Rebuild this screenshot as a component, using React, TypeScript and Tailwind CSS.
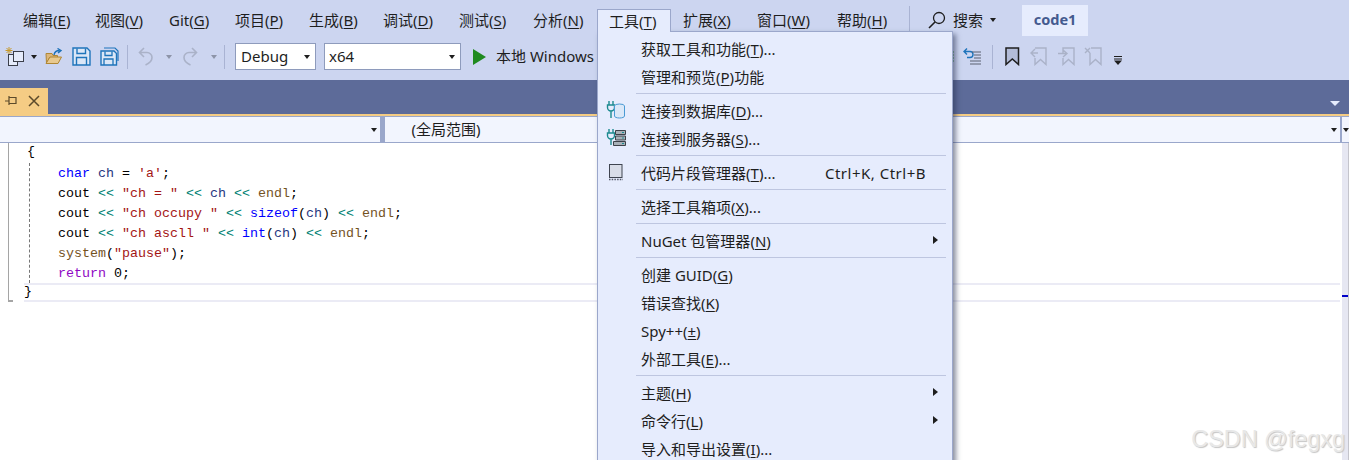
import type { ReactNode } from "react";

const MENUS = [
  { text: "编辑", key: "E", cls: "w-[72px]" },
  { text: "视图", key: "V", cls: "w-[74px]" },
  { text: "Git", key: "G", cls: "w-[66px]" },
  { text: "项目", key: "P", cls: "w-[74px]" },
  { text: "生成", key: "B", cls: "w-[74px]" },
  { text: "调试", key: "D", cls: "w-[76px]" },
  { text: "测试", key: "S", cls: "w-[74px]" },
  { text: "分析", key: "N", cls: "w-[76px]" },
];

const MENUS_AFTER = [
  { text: "扩展", key: "X", cls: "w-[74px]" },
  { text: "窗口", key: "W", cls: "w-[80px]" },
  { text: "帮助", key: "H", cls: "w-[72px]" },
];

function Mnemonic({ text, k, tail = "" }: { text: string; k: string; tail?: string }) {
  return (
    <span className="whitespace-nowrap">
      {text}(<span className="underline underline-offset-2">{k}</span>){tail}
    </span>
  );
}

function Caret({ className = "" }: { className?: string }) {
  return <span className={`block h-0 w-0 border-x-[3.5px] border-t-[4px] border-x-transparent ${className}`} />;
}

function Divider({ className = "" }: { className?: string }) {
  return <span className={`block h-6 w-px bg-[#a9b3d3] ${className}`} />;
}

function Sep() {
  return (
    <div className="flex h-1.5 items-center pl-[38px] pr-[2px]">
      <div className="h-px w-full bg-[#bec6e0]" />
    </div>
  );
}

function Item({ icon, right, arrow, children }: { icon?: ReactNode; right?: string; arrow?: boolean; children: ReactNode }) {
  return (
    <div className="flex h-7 items-center text-[#1e1e1e]">
      <div className="flex w-[43px] shrink-0 items-center pl-[8px]">{icon}</div>
      <div className="flex-1 pt-[2px]">{children}</div>
      {right && <span className="mr-[22px] whitespace-nowrap pt-[2px] tracking-[0.5px]">{right}</span>}
      {arrow && <span className="mr-[10px] block h-0 w-0 border-y-[4px] border-l-[5px] border-y-transparent border-l-[#1e1e1e]" />}
    </div>
  );
}

const DbIcon = (
  <svg width="20" height="20" viewBox="0 0 20 20" fill="none">
    <path d="M3 1v4M7 1v4M1.500 5h7v2.500a3.500 3.500 0 0 1-7 0ZM5 11v7" stroke="#1c8a90" strokeWidth="1.400" />
    <ellipse cx="13.500" cy="6" rx="5" ry="2" fill="#dbe8f8" stroke="#4a9ad4" />
    <path d="M8.500 6v10c0 1.200 2.200 2 5 2s5-.8 5-2V6" fill="#dbe8f8" stroke="#4a9ad4" />
  </svg>
);

const ServerIcon = (
  <svg width="21" height="20" viewBox="0 0 21 20" fill="none">
    <path d="M3 1v4M7 1v4M1.500 5h7v2.500a3.500 3.500 0 0 1-7 0ZM5 11v6" stroke="#1c8a90" strokeWidth="1.400" />
    <path d="M9.500 2.500h10v4h-10ZM9.500 8h10v4h-10ZM7.500 13.500h12v4h-12Z" fill="#a8b0b8" stroke="#3c4148" />
    <path d="M16 4.500h2M16 10h2M16 15.500h2" stroke="#1c8a90" />
  </svg>
);

const SnippetIcon = (
  <svg className="ml-[2px]" width="16" height="18" viewBox="0 0 16 18" fill="none">
    <rect x="1.500" y="1.500" width="12.500" height="13" fill="#d9dde8" stroke="#3f4450" />
    <path d="M1 16.500h14" stroke="#55596a" strokeDasharray="1.500 1.200" strokeWidth="1.600" />
  </svg>
);

function Toolbar() {
  return (
    <div className="flex h-10 items-center pb-[7px]">
      <svg className="ml-[4px]" width="22" height="22" viewBox="0 0 22 22" fill="none">
        <path d="M5 1v7M1.500 4.500h7M2.500 2l5 5M7.500 2l-5 5" stroke="#c79a2c" />
        <rect x="4.500" y="8.500" width="9" height="11" fill="#e6ecfb" stroke="#3b3f4a" />
        <rect x="9.500" y="5.500" width="10" height="10" fill="#e6ecfb" stroke="#3b3f4a" />
      </svg>
      <Caret className="ml-[5px] border-t-[#1e1e1e]" />
      <svg className="ml-[8px]" width="18" height="18" viewBox="0 0 18 18" fill="none">
        <path d="M1 5.500h6l1 2h4.500v2h-8L1.500 15.500Z" fill="#dcb67a" stroke="#b08734" />
        <path d="M1 15.500h12l3.500-6.500H5Z" fill="#e8c98f" stroke="#b08734" />
        <path d="M9 7c.5-3 2.500-4.500 5.500-4.500M12.500 0.500l3.500 2-3 2.500" stroke="#1c71b8" strokeWidth="1.400" />
      </svg>
      <svg className="ml-[9px]" width="19" height="19" viewBox="0 0 19 19" fill="none">
        <path d="M1 1h14l3 3v14H1Z" fill="#dbe7f7" stroke="#1e74bb" strokeWidth="1.400" />
        <path d="M5 1.500v5h8.500v-5M4.500 18v-7.500h10V18" stroke="#1e74bb" strokeWidth="1.400" />
      </svg>
      <svg className="ml-[9px]" width="19" height="19" viewBox="0 0 19 19" fill="none">
        <path d="M4 1h11l3 3v10" stroke="#1e74bb" strokeWidth="1.200" />
        <path d="M1 4h13l2.500 2.500V18H1Z" fill="#dbe7f7" stroke="#1e74bb" strokeWidth="1.400" />
        <path d="M5 4.500v4h7v-4M4 18v-6h9v6" stroke="#1e74bb" strokeWidth="1.300" />
      </svg>
      <Divider className="ml-[8px]" />
      <svg className="ml-[10px]" width="16" height="19" viewBox="0 0 16 19" fill="none">
        <path d="M6 1 1.500 5.500 6 10M1.500 5.500H9a5 5 0 0 1 5 5c0 3.500-3 6-6.500 7.500" stroke="#aab2c8" strokeWidth="1.600" />
      </svg>
      <Caret className="ml-[12px] border-t-[#8d94a8]" />
      <svg className="ml-[10px]" width="16" height="19" viewBox="0 0 16 19" fill="none">
        <path d="M10 1l4.500 4.500L10 10M14.500 5.500H7a5 5 0 0 0-5 5c0 3.500 3 6 6.500 7.500" stroke="#aab2c8" strokeWidth="1.600" />
      </svg>
      <Caret className="ml-[13px] border-t-[#8d94a8]" />
      <Divider className="ml-[7px]" />
      <div className="ml-[10px] flex h-[27px] w-[81px] items-center justify-between border border-[#8e9bbc] bg-white pl-[5px] pr-[5px] text-[#1e1e1e]">
        Debug
        <Caret className="border-t-[#1e1e1e]" />
      </div>
      <div className="ml-[8px] flex h-[27px] w-[137px] items-center justify-between border border-[#8e9bbc] bg-white pl-[4px] pr-[5px] text-[#1e1e1e]">
        x64
        <Caret className="border-t-[#1e1e1e]" />
      </div>
      <svg className="ml-[12px]" width="13" height="16" viewBox="0 0 13 16">
        <path d="M0 0l13 8-13 8Z" fill="#1f8a1f" />
      </svg>
      <span className="ml-[10px] whitespace-nowrap text-[#1e1e1e]">本地 Windows</span>
      {/* rest of the toolbar comes out from behind the menu */}
      <div className="ml-auto flex items-center pr-[227px]">
        <svg width="6" height="16" viewBox="0 0 6 16" fill="none">
          <path d="M0 3h6M0 6h6M0 9h6M0 12h6" stroke="#3f9a4a" strokeWidth="1.200" />
        </svg>
        <svg className="ml-[8px]" width="20" height="20" viewBox="0 0 20 20" fill="none">
          <path d="M5 1.500 2 4.500l3 3M2 4.500h6a3 3 0 0 1 0 6H5" stroke="#1e74bb" strokeWidth="1.400" />
          <path d="M10 5h9M12 8h7M12 11h7M8 14h11M8 17h11" stroke="#5b6070" />
        </svg>
        <Divider className="ml-[10px]" />
        <svg className="ml-[12px]" width="15" height="19" viewBox="0 0 15 19">
          <path d="M1 1h12.500v16.500l-6.200-5.500L1 17.500Z" fill="#b3bcd8" stroke="#1e1e1e" strokeWidth="1.500" />
        </svg>
        <svg className="ml-[10px]" width="17" height="19" viewBox="0 0 17 19" fill="none">
          <path d="M5 1h11v16.500l-5.500-5-5.500 5V11M5 2 1 6l4 4M1 6h7" stroke="#aab2c8" strokeWidth="1.400" />
        </svg>
        <svg className="ml-[10px]" width="18" height="19" viewBox="0 0 18 19" fill="none">
          <path d="M6 6V1h11v16.500l-5.500-5-5.500 5V11M6 3l4 3.500L6 10M1 6.500h8" stroke="#aab2c8" strokeWidth="1.400" />
        </svg>
        <svg className="ml-[9px]" width="18" height="19" viewBox="0 0 18 19" fill="none">
          <path d="M7 1h10v16.500l-5.500-5-5.500 5V6M1 1l5 5M6 1 1 6" stroke="#aab2c8" strokeWidth="1.400" />
        </svg>
        <svg className="ml-[12px] mt-[8px]" width="8" height="9" viewBox="0 0 8 9">
          <path d="M0 0.500h8M0 3h8" stroke="#1e1e1e" />
          <path d="M0 4.500h8L4 9Z" fill="#1e1e1e" />
        </svg>
      </div>
    </div>
  );
}

function CodeLine({ children }: { children: ReactNode }) {
  return <div className="h-5 whitespace-pre leading-[22px]">{children}</div>;
}

const Kw = ({ children }: { children: ReactNode }) => <span className="text-[#0000ff]">{children}</span>;
const Var = ({ children }: { children: ReactNode }) => <span className="text-[#1f377f]">{children}</span>;
const Str = ({ children }: { children: ReactNode }) => <span className="text-[#a31515]">{children}</span>;
const Op = ({ children }: { children: ReactNode }) => <span className="text-[#008073]">{children}</span>;
const Fn = ({ children }: { children: ReactNode }) => <span className="text-[#74531f]">{children}</span>;

function Editor() {
  return (
    <div className="flex min-h-0 flex-1 bg-white">
      {/* outlining margin with its little hook at the bottom */}
      <div className="ml-2 h-[159px] w-[5px] shrink-0 border-b-2 border-l border-[#a5a5a5]" />
      <div className="min-w-0 flex-1 font-['Liberation_Mono',monospace] text-[13.33px] text-black">
        <div className="pl-[14px] leading-5">
          <div className="h-5 leading-[18px]">{"{"}</div>
        </div>
        <div className="ml-4 border-l border-dashed border-[#777777] pl-[28px]">
          <CodeLine>
            <Kw>char</Kw> <Var>ch</Var> = <Str>'a'</Str>;
          </CodeLine>
          <CodeLine>
            cout <Op>{"<<"}</Op> <Str>"ch = "</Str> <Op>{"<<"}</Op> <Var>ch</Var> <Op>{"<<"}</Op> <Fn>endl</Fn>;
          </CodeLine>
          <CodeLine>
            cout <Op>{"<<"}</Op> <Str>"ch occupy "</Str> <Op>{"<<"}</Op> <Kw>sizeof</Kw>(<Var>ch</Var>) <Op>{"<<"}</Op> <Fn>endl</Fn>;
          </CodeLine>
          <CodeLine>
            cout <Op>{"<<"}</Op> <Str>"ch ascll "</Str> <Op>{"<<"}</Op> <Kw>int</Kw>(<Var>ch</Var>) <Op>{"<<"}</Op> <Fn>endl</Fn>;
          </CodeLine>
          <CodeLine>
            <Fn>system</Fn>(<Str>"pause"</Str>);
          </CodeLine>
          <CodeLine>
            <span className="text-[#8f08c4]">return</span> 0;
          </CodeLine>
        </div>
        <div className="ml-[11px] mr-[2px] h-[19px] border-y-2 border-[#ebebf5] leading-[14px]">{"}"}</div>
      </div>
      <div className="w-[7px] shrink-0 border-r border-[#c4c4cc] bg-[#e6e7f2] pt-[152px]">
        <div className="h-0.5 bg-[#0000c8]" />
      </div>
    </div>
  );
}

function ToolsMenu() {
  return (
    <div className="absolute left-[597px] top-[31px] h-[440px] w-[356px] border border-[#9ba7cb] bg-[#e6ecfd] pt-[2px] pr-[4px] shadow-[3px_3px_5px_rgba(40,50,80,0.55)]">
      <Item><Mnemonic text="获取工具和功能" k="T" tail="..." /></Item>
      <Item><Mnemonic text="管理和预览" k="P" tail="功能" /></Item>
      <Sep />
      <Item icon={DbIcon}><Mnemonic text="连接到数据库" k="D" tail="..." /></Item>
      <Item icon={ServerIcon}><Mnemonic text="连接到服务器" k="S" tail="..." /></Item>
      <Sep />
      <Item icon={SnippetIcon} right="Ctrl+K, Ctrl+B"><Mnemonic text="代码片段管理器" k="T" tail="..." /></Item>
      <Sep />
      <Item><Mnemonic text="选择工具箱项" k="X" tail="..." /></Item>
      <Sep />
      <Item arrow><Mnemonic text="NuGet 包管理器" k="N" /></Item>
      <Sep />
      <Item><Mnemonic text="创建 GUID" k="G" /></Item>
      <Item><Mnemonic text="错误查找" k="K" /></Item>
      <Item><Mnemonic text="Spy++" k="±" /></Item>
      <Item><Mnemonic text="外部工具" k="E" tail="..." /></Item>
      <Sep />
      <Item arrow><Mnemonic text="主题" k="H" /></Item>
      <Item arrow><Mnemonic text="命令行" k="L" /></Item>
      <Item><Mnemonic text="导入和导出设置" k="I" tail="..." /></Item>
    </div>
  );
}

export default function App() {
  return (
    <div className="relative flex h-[460px] w-[1349px] flex-col overflow-hidden bg-[#ccd5f0] font-['Noto_Sans','Noto_Sans_CJK_SC',sans-serif] text-[15px]">
      {/* Menu bar */}
      <div className="flex h-10 items-center pl-[23px] text-[#1e1e1e]">
        {MENUS.map((m) => (
          <div key={m.key} className={m.cls}>
            <Mnemonic text={m.text} k={m.key} />
          </div>
        ))}
        <div className="w-[74px]">
          <Mnemonic text="工具" k="T" />
        </div>
        {MENUS_AFTER.map((m) => (
          <div key={m.key} className={m.cls}>
            <Mnemonic text={m.text} k={m.key} />
          </div>
        ))}
        <Divider className="h-7" />
        <svg className="ml-[18px]" width="18" height="18" viewBox="0 0 18 18" fill="none">
          <circle cx="11" cy="7" r="5.500" stroke="#1e1e1e" strokeWidth="1.300" />
          <path d="M7 11 1 17" stroke="#1e1e1e" strokeWidth="1.600" />
        </svg>
        <span className="ml-[7px]">搜索</span>
        <Caret className="ml-[7px] border-t-[#1e1e1e]" />
        <div className="ml-[26px] flex h-[31px] w-[66px] items-center justify-center bg-[#e6ecfd] text-[14.5px] font-bold text-[#445a8f]">
          code1
        </div>
      </div>

      <Toolbar />

      {/* Document tab strip */}
      <div className="flex h-[34px] items-end bg-[#5d6b99]">
        <div className="flex h-[26px] w-12 items-center justify-between bg-[#f5cc84] pl-[5px] pr-2 text-[#5c4a2a]">
          <svg width="12" height="12" viewBox="0 0 12 12" fill="none">
            <path d="M0 6h4M4 2.500h7v6H4ZM4 1v9" stroke="#5c4a2a" strokeWidth="1.200" />
          </svg>
          <svg width="12" height="12" viewBox="0 0 12 12" fill="none">
            <path d="M1 1l10 10M11 1 1 11" stroke="#5c4a2a" strokeWidth="1.500" />
          </svg>
        </div>
        <span className="mb-[8px] ml-auto mr-[9px] block h-0 w-0 border-x-[5px] border-t-[5px] border-x-transparent border-t-[#e6ecfd]" />
      </div>
      <div className="h-0.5 bg-[#f5cc84]" />

      {/* Navigation bar */}
      <div className="flex h-[27px] gap-[5px] border-t border-[#9aa7cb] bg-[#9aa7cb] text-[#1e1e1e]">
        <div className="flex h-[25px] w-[381px] items-center justify-end bg-[#f2f5fe] pr-[3px]">
          <Caret className="border-t-[#1e1e1e]" />
        </div>
        <div className="flex h-[25px] w-[956px] items-center justify-between bg-[#f2f5fe] pl-[26px] pr-[3px]">
          (全局范围)
          <Caret className="border-t-[#1e1e1e]" />
        </div>
        <div className="-ml-[3px] flex h-[25px] flex-1 items-center bg-[#f2f5fe] pl-[1px]">
          <Caret className="border-t-[#1e1e1e]" />
        </div>
      </div>

      <Editor />
      <ToolsMenu />

      {/* 工具 menu header, sits over the panel's top edge */}
      <div className="absolute left-[597px] top-[9px] flex h-[23px] w-[74px] items-center border border-b-0 border-[#9ba7cb] bg-[#e6ecfd] pl-[11px] text-[#1e1e1e]">
        <Mnemonic text="工具" k="T" />
      </div>

      {/* Watermark */}
      <div className="absolute bottom-[9px] right-[4px] font-['Liberation_Sans',sans-serif] text-[23.4px] leading-none text-[#e8e8e8] [text-shadow:1px_1px_1px_#c4c4c4]">
        CSDN @fegxg
      </div>
    </div>
  );
}
